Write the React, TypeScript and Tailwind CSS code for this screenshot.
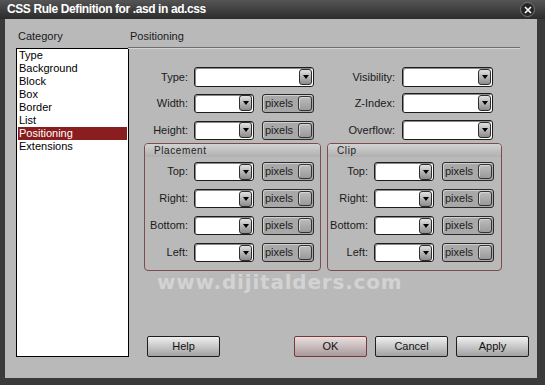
import React from 'react';

const font = { fontFamily: '"Liberation Sans", Arial, sans-serif' };

const Arrow = () => (
    <div className="w-[13px] h-[16px] rounded-[3px] border border-[#2e2e2e] bg-linear-to-b from-[#e2e2e2] to-[#8c8c8c] flex items-center justify-center">
        <div className="w-0 h-0 border-l-[3px] border-r-[3px] border-t-[4px] border-l-transparent border-r-transparent border-t-black" />
    </div>
);

const Select: React.FC<{ className: string }> = ({ className }) => (
    <div className={`${className} bg-white border border-[#1c1c1c] rounded-[3px] flex items-center justify-end pr-[1px] shadow-[inset_1px_1px_0_#8a8a8a]`}>
        <Arrow />
    </div>
);

const Pixels = () => (
    <div className="ml-[8px] w-[52px] h-[19px] border border-[#2a2a2a] rounded-[3px] bg-[#a8a8a8] shadow-[inset_1px_1px_0_#cfcfcf] flex items-center justify-between pl-[2px] pr-[1px]">
        <span className="text-[11px] leading-[13px] text-[#1c1c1c]">pixels</span>
        <div className="w-[14px] h-[15px] rounded-[3px] border border-[#333] bg-linear-to-b from-[#bdbdbd] to-[#9a9a9a] shadow-[inset_1px_1px_0_#d6d6d6]" />
    </div>
);

const UnitRow: React.FC<{ label: string; labelW: string }> = ({ label, labelW }) => (
    <div className="flex items-center h-[19px]">
        <span className={`${labelW} text-right text-[11px] leading-[13px] text-[#1a1a1a] mr-[6px]`}>{label}</span>
        <Select className="w-[60px] h-[19px]" />
        <Pixels />
    </div>
);

const Group: React.FC<{ title: string; width: string; labelW: string }> = ({ title, width, labelW }) => (
    <div className={`${width} border border-[#7d4c4e] rounded-[4px] flex flex-col`}>
        <div className="h-[13px] rounded-t-[3px] bg-linear-to-b from-[#d2d2d2] to-[#b0b0b0] pl-[9px] text-[10px] leading-[13px] tracking-[0.6px] text-[#222]">
            {title}
        </div>
        <div className="flex flex-col gap-[8px] pt-[5px] pb-[8px]">
            {['Top:', 'Right:', 'Bottom:', 'Left:'].map(l => (
                <UnitRow key={l} label={l} labelW={labelW} />
            ))}
        </div>
    </div>
);

const Button: React.FC<{ label: string; ok?: boolean }> = ({ label, ok }) => (
    <div
        className={
            ok
                ? 'w-[73px] h-[21px] rounded-[2px] border border-[#7a3838] bg-linear-to-b from-[#eadfdf] to-[#a89a9a] flex items-center justify-center text-[11px] text-[#111]'
                : 'w-[73px] h-[21px] rounded-[2px] border border-[#1e1e1e] bg-linear-to-b from-[#f0f0f0] to-[#a2a2a2] flex items-center justify-center text-[11px] text-[#111]'
        }
    >
        {label}
    </div>
);

const categories = ['Type', 'Background', 'Block', 'Box', 'Border', 'List', 'Positioning', 'Extensions'];

export default function App() {
    return (
        <div className="w-[545px] h-[385px] bg-[#3a3a3a] flex flex-col overflow-hidden" style={font}>
            {/* title bar */}
            <div className="h-[19px] flex items-center justify-between bg-linear-to-b from-[#555] to-[#2c2c2c] pl-[7px] pr-[10px]">
                <span className="text-white font-bold text-[12px] leading-[17px] tracking-[-0.4px]">
                    CSS Rule Definition for .asd in ad.css
                </span>
                <div className="w-[15px] h-[15px] rounded-full bg-[#262626] border border-[#7a7a7a] flex items-center justify-center">
                    <svg width="8" height="8" viewBox="0 0 8 8">
                        <path d="M1 1 L7 7 M7 1 L1 7" stroke="#fff" strokeWidth="1.6" />
                    </svg>
                </div>
            </div>

            {/* body */}
            <div className="ml-[5px] w-[532px] h-[359px] bg-[#b9b9b9] flex pl-[11px]">
                <div className="w-[113px] flex flex-col pb-[21px]">
                    <div className="h-[29px] pt-[11px] pl-[2px] text-[11px] leading-[13px] text-[#1a1a1a]">Category</div>
                    <div className="flex-1 bg-white border border-black flex flex-col">
                        {categories.map(c => (
                            <div
                                key={c}
                                className={
                                    c === 'Positioning'
                                        ? 'mx-[1px] pl-[1px] h-[13px] text-[11px] leading-[13px] bg-[#8a1d1d] text-white'
                                        : 'mx-[1px] pl-[1px] h-[13px] text-[11px] leading-[13px] text-black'
                                }
                            >
                                {c}
                            </div>
                        ))}
                    </div>
                </div>

                <div className="-ml-px flex-1 flex flex-col pb-[21px]">
                    <div className="pt-[11px] pl-[2px] text-[11px] leading-[13px] text-[#1a1a1a]">Positioning</div>
                    <div className="mt-[4px] w-[392px] h-[2px] border-t border-[#6e6e6e] border-b border-b-[#d4d4d4]" />

                    {/* top fields */}
                    <div className="mt-[18px] flex">
                        <div className="flex flex-col w-[186px]">
                            <div className="flex items-center h-[20px]">
                                <span className="w-[60px] text-right text-[11px] leading-[13px] text-[#1a1a1a] mr-[6px]">Type:</span>
                                <Select className="w-[120px] h-[20px]" />
                            </div>
                            <div className="flex items-center h-[20px] mt-[6px]">
                                <span className="w-[60px] text-right text-[11px] leading-[13px] text-[#1a1a1a] mr-[6px]">Width:</span>
                                <Select className="w-[60px] h-[19px]" />
                                <Pixels />
                            </div>
                            <div className="flex items-center h-[20px] mt-[7px]">
                                <span className="w-[60px] text-right text-[11px] leading-[13px] text-[#1a1a1a] mr-[6px]">Height:</span>
                                <Select className="w-[60px] h-[19px]" />
                                <Pixels />
                            </div>
                        </div>
                        <div className="flex flex-col">
                            <div className="flex items-center h-[20px]">
                                <span className="w-[81px] text-right text-[11px] leading-[13px] text-[#1a1a1a] mr-[7px]">Visibility:</span>
                                <Select className="w-[91px] h-[20px]" />
                            </div>
                            <div className="flex items-center h-[20px] mt-[6px]">
                                <span className="w-[81px] text-right text-[11px] leading-[13px] text-[#1a1a1a] mr-[7px]">Z-Index:</span>
                                <Select className="w-[91px] h-[20px]" />
                            </div>
                            <div className="flex items-center h-[20px] mt-[7px]">
                                <span className="w-[81px] text-right text-[11px] leading-[13px] text-[#1a1a1a] mr-[7px]">Overflow:</span>
                                <Select className="w-[91px] h-[20px]" />
                            </div>
                        </div>
                    </div>

                    {/* placement / clip */}
                    <div className="mt-[3px] pl-[16px] flex gap-[6px]">
                        <Group title="Placement" width="w-[177px]" labelW="w-[43px]" />
                        <Group title="Clip" width="w-[175px]" labelW="w-[40px]" />
                    </div>

                    <div
                        className="mt-[1px] pl-[29px] text-[20px] leading-[21px] font-bold tracking-[0.8px] text-[#d3d3d3]"
                        style={{ fontFamily: '"DejaVu Sans", Verdana, sans-serif' }}
                    >
                        www.dijitalders.com
                    </div>

                    <div className="mt-auto flex pl-[19px] pr-[8px]">
                        <Button label="Help" />
                        <div className="ml-auto flex gap-[8px]">
                            <Button label="OK" ok />
                            <Button label="Cancel" />
                            <Button label="Apply" />
                        </div>
                    </div>
                </div>
            </div>
        </div>
    );
}
